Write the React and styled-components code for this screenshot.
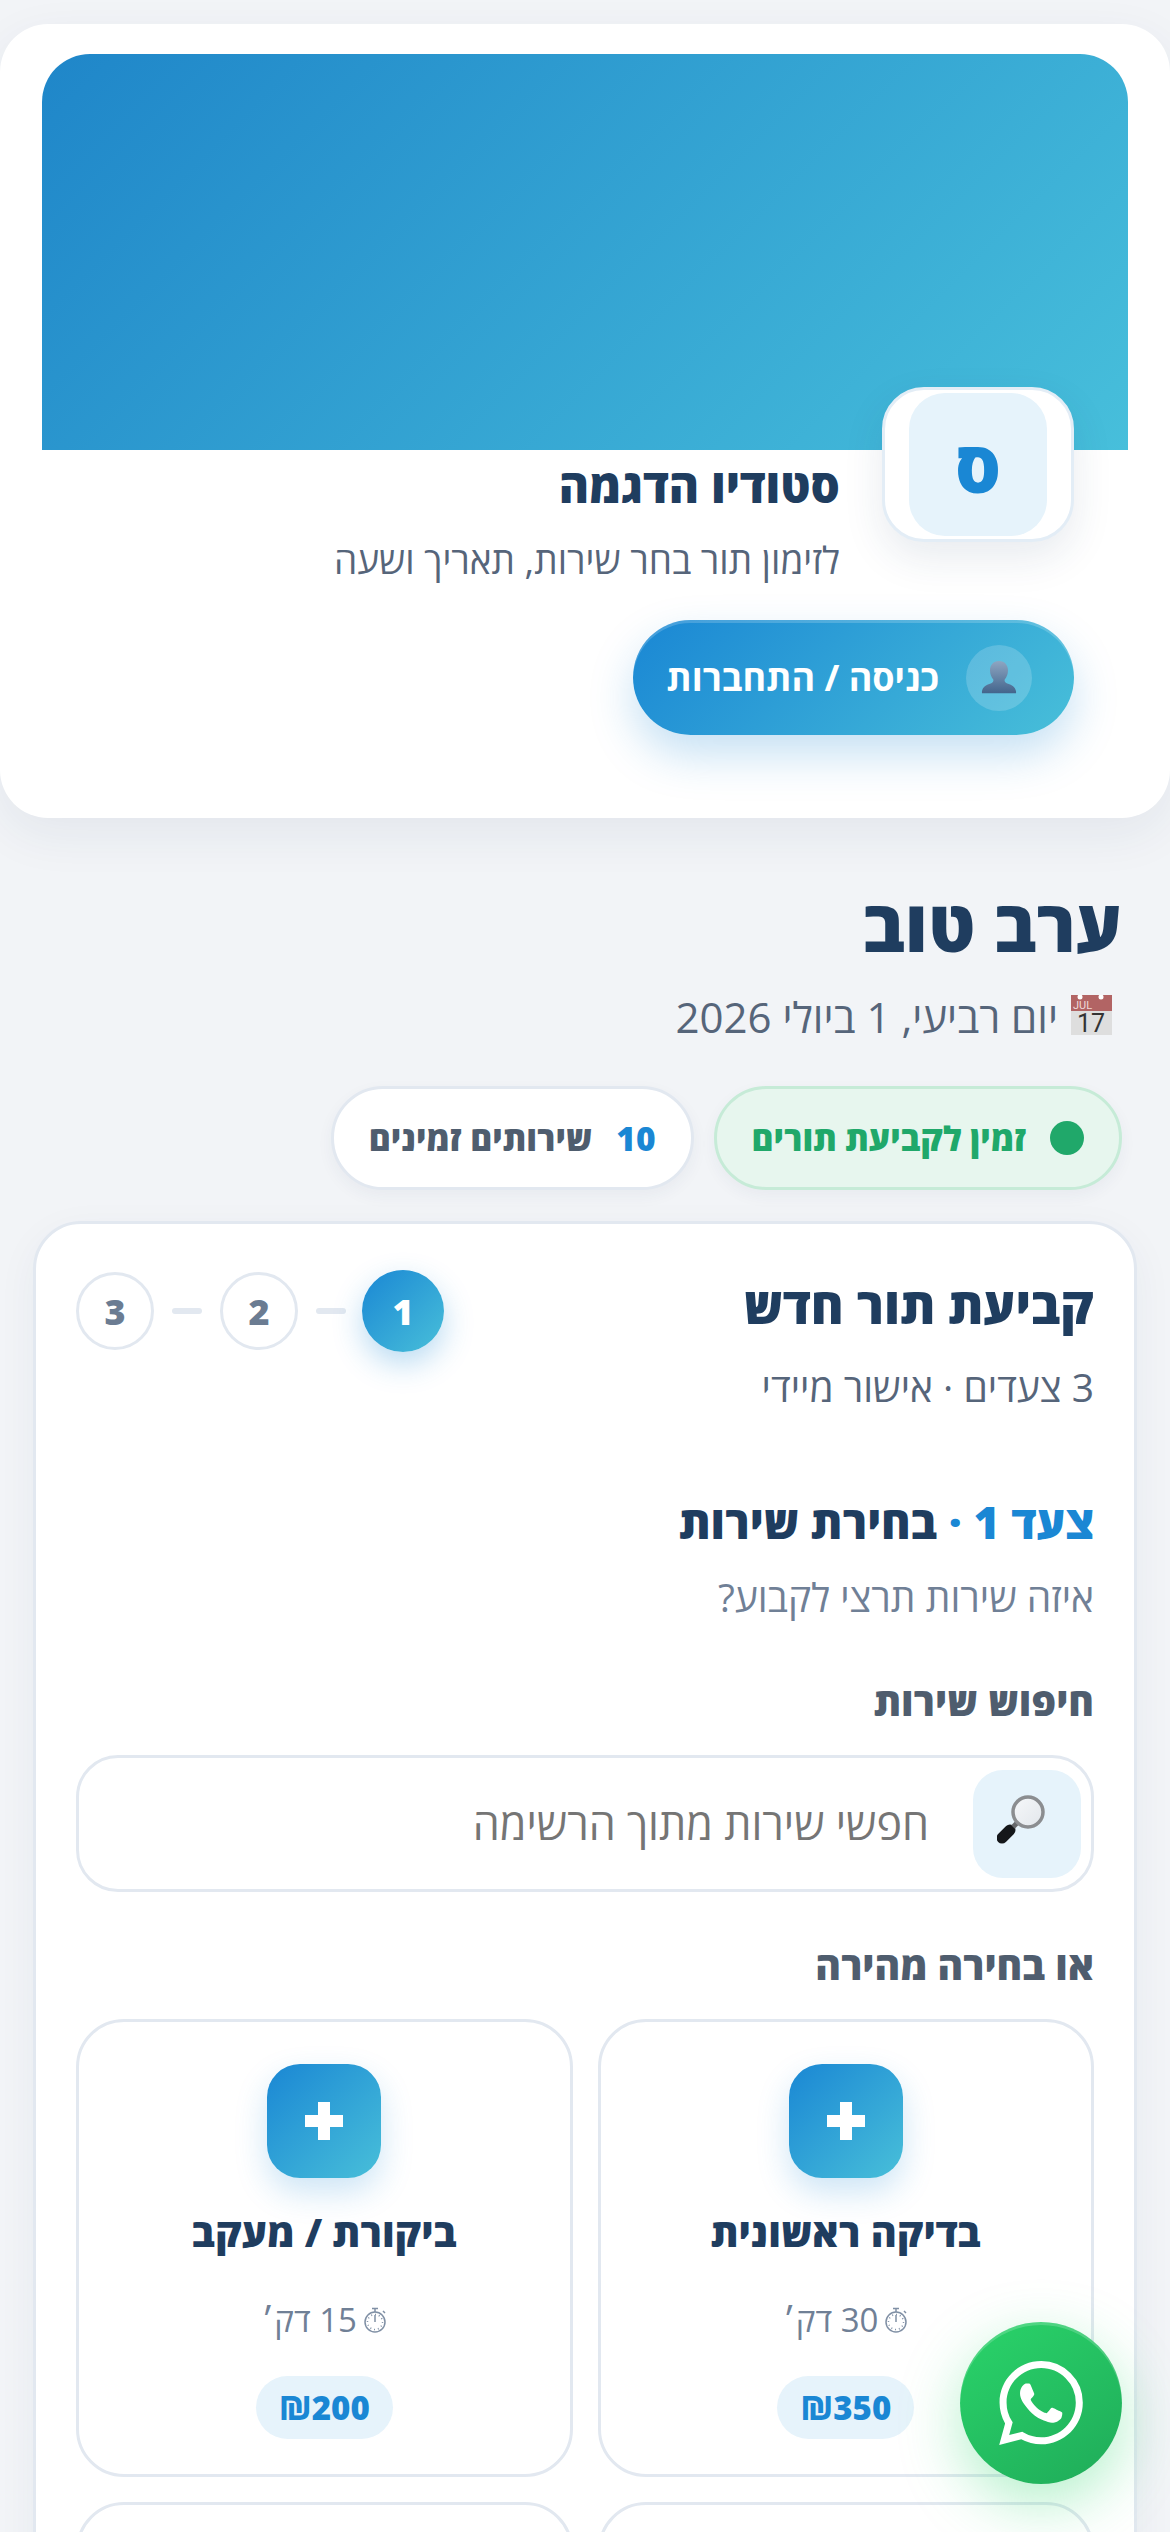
import styled, { createGlobalStyle } from 'styled-components'
import { SiWhatsapp } from 'react-icons/si'

const GlobalStyle = createGlobalStyle`
  html, body {
    margin: 0;
    height: 100%;
    overflow: hidden;
    background: #f2f4f7;
  }
  * {
    box-sizing: border-box;
  }
`

const Page = styled.div`
  height: 2532px;
  overflow: hidden;
  padding-top: 24px;
  font-family: 'Open Sans', Roboto, 'Liberation Sans', sans-serif;
  color: #1f3d5f;
  background: #f2f4f7;
`

const Hero = styled.header`
  height: 794px;
  padding: 30px 42px 0;
  background: #fff;
  border-radius: 48px;
  box-shadow: 0 16px 50px rgba(31, 61, 95, 0.07);
`

const Banner = styled.div`
  height: 396px;
  border-radius: 48px 48px 0 0;
  background: linear-gradient(135deg, #1f86c9, #47bfdb);
`

const Profile = styled.div`
  display: flex;
  gap: 42px;
  margin-top: -63px;
  padding: 0 54px;
`

const AvatarFrame = styled.div`
  flex: none;
  display: flex;
  justify-content: center;
  width: 192px;
  height: 155px;
  padding-top: 3px;
  background: #fff;
  border: 3px solid #e3edf6;
  border-radius: 42px;
  box-shadow: 0 16px 40px rgba(31, 61, 95, 0.1);
`

const AvatarInner = styled.div`
  display: flex;
  align-items: center;
  justify-content: center;
  width: 138px;
  height: 143px;
  font-size: 72px;
  line-height: 1;
  font-weight: 800;
  color: #1a87d4;
  background: #e6f3fb;
  border-radius: 36px;
`

const ProfileText = styled.div`
  padding-top: 70px;
`

const StudioName = styled.h1`
  margin: 0;
  font-size: 46px;
  line-height: 56px;
  font-weight: 800;
`

const StudioNote = styled.p`
  margin: 25px 0 0;
  font-size: 37px;
  line-height: 44px;
  color: #56657a;
`

const LoginRow = styled.div`
  display: flex;
  margin-top: 38px;
  padding: 0 54px;
`

const LoginButton = styled.button`
  display: flex;
  align-items: center;
  gap: 27px;
  width: 441px;
  height: 115px;
  padding: 0 42px 0 20px;
  font: inherit;
  font-size: 36px;
  font-weight: 700;
  white-space: nowrap;
  color: #fff;
  border: 0;
  border-radius: 58px;
  background: linear-gradient(135deg, #1a87d4, #48bfd9);
  box-shadow: inset 0 3px 0 rgba(255, 255, 255, 0.18), 0 20px 44px rgba(26, 135, 212, 0.25);
`

const LoginIcon = styled.span`
  flex: none;
  display: flex;
  align-items: center;
  justify-content: center;
  width: 66px;
  height: 66px;
  border-radius: 50%;
  background: rgba(255, 255, 255, 0.18);
`

const Greeting = styled.section`
  padding: 64px 48px 0;
`

const GreetingTitle = styled.h2`
  margin: 0;
  font-size: 72px;
  line-height: 84px;
  font-weight: 800;
`

const DateLine = styled.div`
  display: flex;
  align-items: center;
  gap: 13px;
  margin: 26px 10px 0 0;
  font-size: 42px;
  line-height: 50px;
  color: #56657a;
`

const PillRow = styled.div`
  display: flex;
  gap: 20px;
  margin-top: 44px;
`

const Pill = styled.div`
  display: flex;
  align-items: center;
  gap: 24px;
  height: 104px;
  padding: 0 35px;
  font-size: 33.500px;
  font-weight: 800;
  white-space: nowrap;
  border-radius: 52px;
  color: ${p => (p.$green ? '#20a86a' : '#4f5d6e')};
  background: ${p => (p.$green ? '#e7f6ee' : '#fff')};
  border: 3px solid ${p => (p.$green ? '#c6ebd7' : '#e2e8f0')};
  box-shadow: 0 6px 16px rgba(31, 61, 95, 0.05);
`

const Dot = styled.span`
  width: 34px;
  height: 34px;
  border-radius: 50%;
  background: #20a86a;
`

const Count = styled.span`
  color: #1a87d4;
`

const BookingCard = styled.main`
  margin: 31px 33px 0;
  padding: 46px 40px 60px;
  background: #fff;
  border: 3px solid #e2e8f0;
  border-radius: 48px 48px 0 0;
  box-shadow: 0 12px 40px rgba(31, 61, 95, 0.05);
`

const BookingHead = styled.div`
  display: flex;
  align-items: flex-start;
  justify-content: space-between;
`

const BookingTitle = styled.h3`
  margin: 7px 0 0;
  font-size: 50px;
  line-height: 56px;
  font-weight: 800;
`

const BookingNote = styled.p`
  margin: 32px 0 0;
  font-size: 39px;
  line-height: 44px;
  color: #56657a;
`

const Stepper = styled.div`
  display: flex;
  align-items: center;
  gap: 18px;
  direction: ltr;
  height: 78px;
  margin-top: 2px;
`

const Step = styled.span`
  display: flex;
  align-items: center;
  justify-content: center;
  width: ${p => (p.$active ? 82 : 78)}px;
  height: ${p => (p.$active ? 82 : 78)}px;
  margin: ${p => (p.$active ? '0 -2px' : 0)};
  font-size: 36px;
  font-weight: 800;
  border-radius: 50%;
  color: ${p => (p.$active ? '#fff' : '#6b7c92')};
  border: ${p => (p.$active ? 0 : '3px solid #e2e8f0')};
  background: ${p => (p.$active ? 'linear-gradient(135deg, #1a87d4, #48bfd9)' : '#fff')};
  box-shadow: ${p => (p.$active ? '0 12px 30px rgba(26, 135, 212, 0.3)' : 'none')};
`

const StepLine = styled.span`
  width: 30px;
  height: 6px;
  border-radius: 3px;
  background: #e2e8f0;
`

const StepTitle = styled.h4`
  margin: 85px 0 0;
  font-size: 45px;
  line-height: 56px;
  font-weight: 800;
`

const StepAccent = styled.span`
  color: #1a87d4;
`

const StepNote = styled.p`
  margin: 24px 0 0;
  font-size: 39px;
  line-height: 46px;
  color: #708096;
`

const FieldLabel = styled.div`
  margin-top: ${p => p.$top}px;
  font-size: 39px;
  line-height: 44px;
  font-weight: 800;
  color: #4f5d6e;
`

const SearchBox = styled.div`
  display: flex;
  align-items: center;
  gap: 44px;
  height: 137px;
  margin-top: 32px;
  padding: 0 10px;
  border: 3px solid #e2e8f0;
  border-radius: 42px;
`

const SearchIcon = styled.span`
  flex: none;
  display: flex;
  align-items: center;
  justify-content: center;
  width: 108px;
  height: 108px;
  background: #e6f3fb;
  border-radius: 30px;
`

const SearchInput = styled.input`
  flex: 1;
  min-width: 0;
  padding: 0;
  font: inherit;
  font-size: 43px;
  border: 0;
  outline: 0;
  background: transparent;

  &::placeholder {
    color: #757575;
  }
`

const ServiceGrid = styled.div`
  display: grid;
  grid-template-columns: 1fr 1fr;
  gap: 25px;
  margin-top: 32px;
`

const ServiceCard = styled.div`
  display: flex;
  flex-direction: column;
  align-items: center;
  height: 458px;
  padding-top: 42px;
  background: #fff;
  border: 3px solid #e2e8f0;
  border-radius: 48px;
`

const ServiceIcon = styled.span`
  display: flex;
  align-items: center;
  justify-content: center;
  width: 114px;
  height: 114px;
  border-radius: 33px;
  background: linear-gradient(135deg, #1a87d4, #48bfd9);
  box-shadow: 0 14px 32px rgba(26, 135, 212, 0.22);
`

const ServiceName = styled.div`
  margin-top: 29px;
  font-size: 39.500px;
  line-height: 50px;
  font-weight: 800;
`

const Duration = styled.div`
  display: flex;
  align-items: center;
  gap: 6px;
  margin-top: 42px;
  font-size: 33px;
  line-height: 42px;
  color: #708096;
`

const Price = styled.div`
  display: flex;
  align-items: center;
  justify-content: center;
  width: 137px;
  height: 63px;
  margin-top: 35px;
  font-size: 33px;
  font-weight: 800;
  color: #1a87d4;
  background: #e6f3fb;
  border-radius: 32px;
`

const WhatsappButton = styled.a`
  position: fixed;
  right: 48px;
  top: 2322px;
  display: flex;
  align-items: center;
  justify-content: center;
  width: 162px;
  height: 162px;
  color: #fff;
  border-radius: 50%;
  background: linear-gradient(145deg, #2ad46a, #1fab59);
  box-shadow: inset 0 3px 0 rgba(255, 255, 255, 0.18), 0 20px 60px rgba(37, 211, 102, 0.35);
`

const UserGlyph = () => (
  <svg width="36" height="36" viewBox="0 0 38 38">
    <defs>
      <linearGradient id="bust" x1="0" y1="0" x2="0" y2="1">
        <stop offset="0" stopColor="#8ea6c2" />
        <stop offset="1" stopColor="#43658c" />
      </linearGradient>
    </defs>
    <path
      d="M19 1c6 0 9.500 4.500 9.500 10 0 4-1.500 7-3.500 9.500-.5 2 .5 3.500 3.500 4.500 4 1.300 7.500 3 8.500 8v2H1v-2c1-5 4.500-6.700 8.500-8 3-1 4-2.500 3.500-4.500C11 18 9.500 15 9.500 11 9.500 5.500 13 1 19 1z"
      fill="url(#bust)"
    />
  </svg>
)

const CalendarGlyph = () => (
  <svg width="41" height="44" viewBox="0 0 41 44" direction="ltr">
    <rect width="41" height="40" fill="#dedede" />
    <rect width="41" height="16" fill="#b26464" />
    <circle cx="9" cy="2" r="2.500" fill="#fff" />
    <circle cx="30" cy="2" r="2.500" fill="#fff" />
    <text x="2" y="14" fontSize="11" fill="#f0dada" fontFamily="Roboto, sans-serif">JUL</text>
    <text x="20" y="37" fontSize="25" textAnchor="middle" fill="#333" fontFamily="Roboto, sans-serif">17</text>
  </svg>
)

const LensGlyph = () => (
  <svg width="60" height="60" viewBox="0 0 60 60">
    <defs>
      <linearGradient id="glass" x1="0" y1="0" x2="1" y2="1">
        <stop offset="0" stopColor="#f6f8fa" />
        <stop offset="1" stopColor="#e2e6eb" />
      </linearGradient>
    </defs>
    <line x1="5" y1="44" x2="13" y2="36" stroke="#15171a" strokeWidth="11" strokeLinecap="round" />
    <line x1="16" y1="33" x2="21" y2="28" stroke="#66686b" strokeWidth="5" />
    <circle cx="31" cy="18" r="15" fill="url(#glass)" stroke="#8b8d90" strokeWidth="3.500" />
  </svg>
)

const WatchGlyph = () => (
  <svg width="24" height="26" viewBox="0 0 24 26" fill="none" stroke="#8090a5">
    <path d="M9 1.500h6M12 2v3M20 4l2 2" strokeWidth="1.500" />
    <circle cx="12" cy="15" r="10" strokeWidth="1.500" />
    <path d="M12 15V8" strokeWidth="1.500" />
    <circle cx="12" cy="15" r="7.500" strokeWidth="1.500" strokeDasharray="1 2.900" />
  </svg>
)

const PlusGlyph = () => (
  <svg width="38" height="38" viewBox="0 0 38 38">
    <path d="M13 0h12v13h13v12H25v13H13V25H0V13h13z" fill="#fff" />
  </svg>
)

const services = [
  { name: 'בדיקה ראשונית', time: '30 דק׳', price: '₪350' },
  { name: 'ביקורת / מעקב', time: '15 דק׳', price: '₪200' },
]

export default function App() {
  return (
    <>
      <GlobalStyle />
      <Page dir="rtl">
        <Hero>
          <Banner />
          <Profile>
            <AvatarFrame>
              <AvatarInner>ס</AvatarInner>
            </AvatarFrame>
            <ProfileText>
              <StudioName>סטודיו הדגמה</StudioName>
              <StudioNote>לזימון תור בחר שירות, תאריך ושעה</StudioNote>
            </ProfileText>
          </Profile>
          <LoginRow>
            <LoginButton>
              <LoginIcon>
                <UserGlyph />
              </LoginIcon>
              כניסה / התחברות
            </LoginButton>
          </LoginRow>
        </Hero>

        <Greeting>
          <GreetingTitle>ערב טוב</GreetingTitle>
          <DateLine>
            <CalendarGlyph />
            יום רביעי, 1 ביולי 2026
          </DateLine>
          <PillRow>
            <Pill $green>
              <Dot />
              זמין לקביעת תורים
            </Pill>
            <Pill>
              <Count>10</Count>
              שירותים זמינים
            </Pill>
          </PillRow>
        </Greeting>

        <BookingCard>
          <BookingHead>
            <div>
              <BookingTitle>קביעת תור חדש</BookingTitle>
              <BookingNote>3 צעדים · אישור מיידי</BookingNote>
            </div>
            <Stepper>
              <Step>3</Step>
              <StepLine />
              <Step>2</Step>
              <StepLine />
              <Step $active>1</Step>
            </Stepper>
          </BookingHead>

          <StepTitle>
            <StepAccent>צעד 1 · </StepAccent>
            בחירת שירות
          </StepTitle>
          <StepNote>איזה שירות תרצי לקבוע?</StepNote>

          <FieldLabel $top={59}>חיפוש שירות</FieldLabel>
          <SearchBox>
            <SearchIcon>
              <LensGlyph />
            </SearchIcon>
            <SearchInput placeholder="חפשי שירות מתוך הרשימה" />
          </SearchBox>

          <FieldLabel $top={51}>או בחירה מהירה</FieldLabel>
          <ServiceGrid>
            {services.map(service => (
              <ServiceCard key={service.name}>
                <ServiceIcon>
                  <PlusGlyph />
                </ServiceIcon>
                <ServiceName>{service.name}</ServiceName>
                <Duration>
                  <WatchGlyph />
                  {service.time}
                </Duration>
                <Price>{service.price}</Price>
              </ServiceCard>
            ))}
            <ServiceCard />
            <ServiceCard />
          </ServiceGrid>
        </BookingCard>

        <WhatsappButton href="#" aria-label="WhatsApp">
          <SiWhatsapp size={84} />
        </WhatsappButton>
      </Page>
    </>
  )
}
